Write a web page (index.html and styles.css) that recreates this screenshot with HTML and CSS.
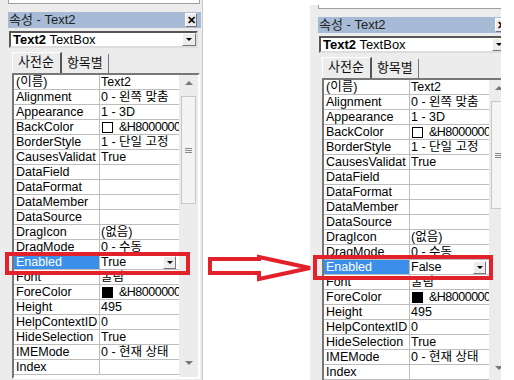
FILE: index.html
```html
<!DOCTYPE html>
<html>
<head>
<meta charset="utf-8">
<link rel="stylesheet" href="styles.css">
</head>
<body>
<div class="stage">
  <div class="panel">
    <div class="topbox"></div>
    <div class="titlebar"><span class="ttext">속성 - Text2</span><span class="close">✕</span></div>
    <div class="combo"><span class="ctext"><b>Text2</b> TextBox</span><span class="ddbtn"><i class="tri"></i></span></div>
    <div class="tabs"><div class="tab active">사전순</div><div class="tab">항목별</div></div>
    <div class="gridframe">
      <div class="grid">
        <div class="row"><div class="n">(이름)</div><div class="v">Text2</div></div>
        <div class="row"><div class="n">Alignment</div><div class="v">0 - 왼쪽 맞춤</div></div>
        <div class="row"><div class="n">Appearance</div><div class="v">1 - 3D</div></div>
        <div class="row"><div class="n">BackColor</div><div class="v hex"><i class="sw white"></i>&amp;H80000005</div></div>
        <div class="row"><div class="n">BorderStyle</div><div class="v">1 - 단일 고정</div></div>
        <div class="row"><div class="n">CausesValidat</div><div class="v">True</div></div>
        <div class="row"><div class="n">DataField</div><div class="v"></div></div>
        <div class="row"><div class="n">DataFormat</div><div class="v"></div></div>
        <div class="row"><div class="n">DataMember</div><div class="v"></div></div>
        <div class="row"><div class="n">DataSource</div><div class="v"></div></div>
        <div class="row"><div class="n">DragIcon</div><div class="v">(없음)</div></div>
        <div class="row"><div class="n">DragMode</div><div class="v">0 - 수동</div></div>
        <div class="row sel"><div class="n">Enabled</div><div class="v">True<span class="ddbtn small"><i class="tri"></i></span></div></div>
        <div class="row"><div class="n">Font</div><div class="v">굴림</div></div>
        <div class="row"><div class="n">ForeColor</div><div class="v hex"><i class="sw black"></i>&amp;H80000008</div></div>
        <div class="row"><div class="n">Height</div><div class="v">495</div></div>
        <div class="row"><div class="n">HelpContextID</div><div class="v">0</div></div>
        <div class="row"><div class="n">HideSelection</div><div class="v">True</div></div>
        <div class="row"><div class="n">IMEMode</div><div class="v">0 - 현재 상태</div></div>
        <div class="row"><div class="n">Index</div><div class="v"></div></div>
      </div>
      <div class="scroll">
        <i class="arr up"></i>
        <div class="thumb"><span class="grip"></span></div>
        <i class="arr down"></i>
      </div>
    </div>
  </div>

  <div class="clip">
  <div class="panel right">
    <div class="topbox"></div>
    <div class="titlebar"><span class="ttext">속성 - Text2</span><span class="close">✕</span></div>
    <div class="combo"><span class="ctext"><b>Text2</b> TextBox</span><span class="ddbtn"><i class="tri"></i></span></div>
    <div class="tabs"><div class="tab active">사전순</div><div class="tab">항목별</div></div>
    <div class="gridframe">
      <div class="grid">
        <div class="row"><div class="n">(이름)</div><div class="v">Text2</div></div>
        <div class="row"><div class="n">Alignment</div><div class="v">0 - 왼쪽 맞춤</div></div>
        <div class="row"><div class="n">Appearance</div><div class="v">1 - 3D</div></div>
        <div class="row"><div class="n">BackColor</div><div class="v hex"><i class="sw white"></i>&amp;H80000005</div></div>
        <div class="row"><div class="n">BorderStyle</div><div class="v">1 - 단일 고정</div></div>
        <div class="row"><div class="n">CausesValidat</div><div class="v">True</div></div>
        <div class="row"><div class="n">DataField</div><div class="v"></div></div>
        <div class="row"><div class="n">DataFormat</div><div class="v"></div></div>
        <div class="row"><div class="n">DataMember</div><div class="v"></div></div>
        <div class="row"><div class="n">DataSource</div><div class="v"></div></div>
        <div class="row"><div class="n">DragIcon</div><div class="v">(없음)</div></div>
        <div class="row"><div class="n">DragMode</div><div class="v">0 - 수동</div></div>
        <div class="row sel"><div class="n">Enabled</div><div class="v">False<span class="ddbtn small"><i class="tri"></i></span></div></div>
        <div class="row"><div class="n">Font</div><div class="v">굴림</div></div>
        <div class="row"><div class="n">ForeColor</div><div class="v hex"><i class="sw black"></i>&amp;H80000008</div></div>
        <div class="row"><div class="n">Height</div><div class="v">495</div></div>
        <div class="row"><div class="n">HelpContextID</div><div class="v">0</div></div>
        <div class="row"><div class="n">HideSelection</div><div class="v">True</div></div>
        <div class="row"><div class="n">IMEMode</div><div class="v">0 - 현재 상태</div></div>
        <div class="row"><div class="n">Index</div><div class="v"></div></div>
      </div>
      <div class="scroll">
        <i class="arr up"></i>
        <div class="thumb"><span class="grip"></span></div>
        <i class="arr down"></i>
      </div>
    </div>
  </div>
  </div>

  <svg class="annot" width="514" height="380" viewBox="0 0 514 380">
    <rect x="7" y="254" width="181" height="19" fill="none" stroke="#e3212b" stroke-width="4"/>
    <rect x="315" y="257" width="176" height="21" fill="none" stroke="#e3212b" stroke-width="4"/>
    <path d="M210,259 H259 V257 L310,268 L259,279 V273 H210 Z" fill="#fff" stroke="#e3212b" stroke-width="4" stroke-linejoin="miter"/>
  </svg>
</div>
</body>
</html>
```
FILE: styles.css
```css
* { box-sizing: border-box; }
html, body { margin: 0; padding: 0; background: #fff; }
body { width: 514px; height: 380px; overflow: hidden; font-family: "Liberation Sans", "Noto Sans CJK KR", sans-serif; font-size: 13px; color: #000; }
.stage { position: relative; width: 514px; height: 380px; display: flex; align-items: flex-start; }

.panel { width: 203px; height: 380px; flex: none; background: #ececec; padding-left: 8px; border-right: 1px solid #c8c8c8; display: flex; flex-direction: column; }
.clip { width: 191px; height: 380px; margin-left: 107px; overflow: hidden; flex: none; }
.panel.right { margin-top: 5px; }

.topbox { height: 4px; width: 192px; background: #fff; border: 1px solid #a0a0a0; border-top: none; }
.titlebar { margin-top: 8px; height: 16px; width: 193px; background: #a7bbd7; display: flex; align-items: center; justify-content: space-between; padding-left: 1px; }
.ttext { font-size: 13px; color: #222; line-height: 16px; }
.close { width: 12px; height: 14px; margin-right: 4px; background: #ececec; border: 1px solid; border-color: #fff #777 #777 #fff; font-size: 11px; font-weight: bold; line-height: 12px; text-align: center; color: #000; }

.combo { margin-top: 3px; margin-left: 1px; width: 189px; height: 17px; background: #fff; border: 2px solid; border-color: #555 #ddd #ddd #555; display: flex; align-items: center; justify-content: space-between; padding-left: 2px; }
.ctext { font-size: 13px; line-height: 13px; }
.ddbtn { width: 14px; height: 13px; background: #ececec; border: 1px solid; border-color: #fff #777 #777 #fff; display: flex; align-items: center; justify-content: center; flex: none; }
.tri { display: block; width: 0; height: 0; border-left: 3px solid transparent; border-right: 3px solid transparent; border-top: 3px solid #000; }

.tabs { margin-top: 4px; margin-left: 4px; height: 21px; display: flex; align-items: flex-end; }
.tab { height: 19px; padding: 0 5px; font-size: 13px; line-height: 18px; border-right: 1px solid #777; color: #111; }
.tab.active { height: 21px; padding: 0 6px 0 5px; border-left: 1px solid #fff; border-top: 1px solid #fff; border-right: 2px solid #555; }

.gridframe { margin-left: 4px; width: 188px; height: 306px; border: 2px solid; border-color: #777 #fff #fff #777; background: #ececec; display: flex; }
.grid { width: 165px; background: #fff; overflow: hidden; font-size: 12.5px; }
.row { height: 15px; display: flex; border-bottom: 1px solid #bdbdbd; }
.n { width: 86px; flex: none; padding-left: 2px; border-right: 1px solid #bdbdbd; white-space: nowrap; overflow: hidden; line-height: 14px; }
.v { flex: 1; padding-left: 1px; white-space: nowrap; overflow: hidden; line-height: 14px; display: flex; align-items: center; }
.v.hex { letter-spacing: -0.5px; }
.sel .n { background: #3b8fea; color: #fff; }
.sel .v { padding-right: 3px; justify-content: space-between; }
.ddbtn.small { width: 13px; height: 13px; }
.sw { display: inline-block; width: 11px; height: 11px; margin: 0 6px 0 1px; border: 1px solid #000; flex: none; }
.sw.white { background: #fff; }
.sw.black { background: #000; }

.scroll { width: 17px; margin-left: 1px; display: flex; flex-direction: column; align-items: center; background: #ececec; }
.arr { display: block; width: 0; height: 0; border-left: 4px solid transparent; border-right: 4px solid transparent; margin: 6px 0 5px; }
.arr.up { border-bottom: 4px solid #777; }
.arr.down { border-top: 4px solid #777; margin-top: auto; margin-bottom: 12px; }
.thumb { width: 15px; height: 108px; margin-top: 6px; background: #f4f4f4; border: 1px solid #c8c8c8; display: flex; align-items: center; justify-content: center; }
.grip { display: block; width: 7px; height: 5px; border-top: 1px solid #888; border-bottom: 1px solid #888; position: relative; }
.grip::after { content: ""; position: absolute; left: 0; right: 0; top: 1px; border-top: 1px solid #888; }

.annot { position: absolute; left: 0; top: 0; pointer-events: none; }
```
